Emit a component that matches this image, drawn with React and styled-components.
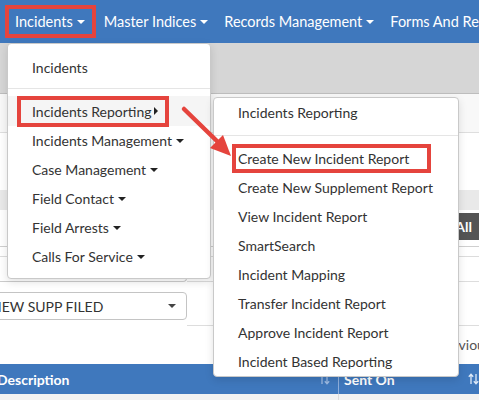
import styled, { createGlobalStyle } from "styled-components";

const GlobalStyle = createGlobalStyle`
  * { box-sizing: border-box; }
  body {
    margin: 0;
    background: #fff;
    font-family: Lato, "Open Sans", sans-serif;
    overflow: hidden;
  }
`;

const RED = "#e5443d";
const BLUE = "#3f78bd";

/* page + navbar */
const Page = styled.div`
  position: relative;
  width: 479px;
  height: 400px;
  overflow: hidden;
`;

const Navbar = styled.nav`
  display: flex;
  align-items: center;
  height: 43px;
  padding-left: 5px;
  background: ${BLUE};
  white-space: nowrap;
`;

const NavItem = styled.div`
  display: flex;
  align-items: center;
  flex-shrink: 0;
  height: 33px;
  padding: ${(p) => (p.$marked ? "0 7px 0 6px" : "0 8px")};
  border: ${(p) => (p.$marked ? `4px solid ${RED}` : "none")};
  color: #fff;
  font-size: 14.5px;
`;

const Caret = styled.span`
  display: inline-block;
  width: 0;
  height: 0;
  margin-left: 4px;
  border-left: 4px solid transparent;
  border-right: 4px solid transparent;
  border-top: 4px solid ${(p) => p.$color || "#222"};
`;

const CaretRight = styled.span`
  display: inline-block;
  width: 0;
  height: 0;
  margin-left: 2px;
  border-top: 4px solid transparent;
  border-bottom: 4px solid transparent;
  border-left: 4px solid #222;
`;

/* background page */
const Content = styled.div`
  margin-left: -20px;
  width: calc(100% + 20px);
`;

const GreyBand = styled.div`
  height: 51px;
  background: #d6d6d6;
  border-bottom: 1px solid #bdbdbd;
`;

const ToolRow = styled.div`
  height: 39px;
  background: #f8f8f8;
  border-bottom: 1px solid #dedede;
`;

const Gap = styled.div`
  height: ${(p) => p.$h}px;
`;

const PanelHeading = styled.div`
  height: 20px;
  background: #e9e9e9;
`;

const FilterRow = styled.div`
  display: flex;
  justify-content: flex-end;
  align-items: flex-start;
  height: 37px;
  padding-top: 3px;
  border-bottom: 1px solid #cfcfcf;
`;

const DarkButton = styled.div`
  display: flex;
  align-items: center;
  height: 27px;
  padding: 0 7px 0 12px;
  border-radius: 3px 0 0 3px;
  background: #545454;
  color: #fff;
  font-size: 14px;
  font-weight: 700;
`;

const ThinRow = styled.div`
  height: 10px;
  border-bottom: 1px solid #dcdcdc;
`;

const FormArea = styled.div`
  display: grid;
  grid-template-columns: 207px 1fr;
  height: 107px;
`;

const Column = styled.div`
  display: flex;
  flex-direction: column;
`;

const Input = styled.div`
  height: 25px;
  border: 1px solid #cccccc;
  border-top: none;
  border-radius: 0 0 4px 4px;
`;

const Select = styled.div`
  display: flex;
  align-items: center;
  justify-content: space-between;
  height: 28px;
  margin-top: 10px;
  padding: 0 10px;
  border: 1px solid #c4c4c4;
  border-radius: 4px;
  color: #333;
  font-size: 14px;
`;

const RightLine = styled.div`
  height: ${(p) => p.$h}px;
  border-bottom: 1px solid #dddddd;
`;

const Pager = styled.div`
  display: flex;
  align-items: center;
  height: 37px;
  white-space: nowrap;
`;

const PagerText = styled.span`
  margin-left: auto;
  margin-right: -12px;
  color: #555;
  font-size: 14px;
`;

const TableHead = styled.div`
  display: grid;
  grid-template-columns: 359px 1fr;
  height: 30px;
  background: ${BLUE};
`;

const HeadCell = styled.div`
  display: flex;
  align-items: center;
  justify-content: space-between;
  padding: 0 ${(p) => p.$right}px 0 ${(p) => p.$left}px;
  border-right: ${(p) => (p.$divider ? "1px solid #8eaedb" : "none")};
  color: #fff;
  font-size: 14px;
  font-weight: 700;
  white-space: nowrap;
`;

const BodyRow = styled.div`
  display: grid;
  grid-template-columns: 359px 1fr;
  height: 10px;
  background: #f2f2f2;
`;

const BodyCell = styled.div`
  border-right: ${(p) => (p.$divider ? "1px solid #dcdcdc" : "none")};
`;

/* dropdown menus */
const Menu = styled.div`
  position: absolute;
  left: ${(p) => p.$left}px;
  top: ${(p) => p.$top}px;
  width: ${(p) => p.$width}px;
  padding: ${(p) => p.$pad};
  background: #fff;
  border: 1px solid #c9c9c9;
  border-radius: 4px;
  box-shadow: 0 3px 8px rgba(0, 0, 0, 0.12);
`;

const MenuItem = styled.div`
  display: flex;
  align-items: center;
  height: ${(p) => p.$h || 29}px;
  padding-left: ${(p) => p.$indent}px;
  background: ${(p) => (p.$active ? "#f5f5f5" : "transparent")};
  color: #333;
  font-size: 14px;
  white-space: nowrap;
`;

const Marked = styled.span`
  display: inline-flex;
  align-items: center;
  height: ${(p) => p.$h}px;
  padding: 0 ${(p) => p.$right}px 0 ${(p) => p.$left}px;
  border: 4px solid ${RED};
`;

const Divider = styled.div`
  height: 1px;
  margin: ${(p) => p.$m};
  background: #e5e5e5;
`;

const Overlay = styled.svg`
  position: absolute;
  left: 0;
  top: 0;
  pointer-events: none;
`;

function SortIcon({ color }) {
  return (
    <svg width="11" height="12" viewBox="0 0 11 12">
      <g fill="none" stroke={color} strokeWidth="1.3">
        <path d="M3 11V1.5M0.8 3.8L3 1.3L5.2 3.8" />
        <path d="M8 1v9.5M5.8 8.2L8 10.7L10.2 8.2" />
      </g>
    </svg>
  );
}

const menuOne = ["Incidents Management", "Case Management", "Field Contact", "Field Arrests", "Calls For Service"];
const menuTwo = [
  "Create New Supplement Report",
  "View Incident Report",
  "SmartSearch",
  "Incident Mapping",
  "Transfer Incident Report",
  "Approve Incident Report",
  "Incident Based Reporting",
];

export default function App() {
  return (
    <Page>
      <GlobalStyle />
      <Navbar>
        <NavItem $marked>
          Incidents <Caret $color="#fff" />
        </NavItem>
        <NavItem>
          Master Indices <Caret $color="#fff" />
        </NavItem>
        <NavItem>
          Records Management <Caret $color="#fff" />
        </NavItem>
        <NavItem>Forms And Reports</NavItem>
      </Navbar>

      <Content>
        <GreyBand />
        <ToolRow />
        <Gap $h={57} />
        <PanelHeading />
        <FilterRow>
          <DarkButton>Select All</DarkButton>
        </FilterRow>
        <ThinRow />
        <FormArea>
          <Column>
            <Input />
            <Select>
              NEW SUPP FILED
              <Caret $color="#444" />
            </Select>
          </Column>
          <Column>
            <RightLine $h={25} />
            <RightLine $h={44} />
            <Pager>
              <PagerText>Previous</PagerText>
            </Pager>
          </Column>
        </FormArea>
        <TableHead>
          <HeadCell $left={17} $right={8} $divider>
            Description
            <SortIcon color="#9dbbe3" />
          </HeadCell>
          <HeadCell $left={5} $right={0}>
            Sent On
            <SortIcon color="#dce8f7" />
          </HeadCell>
        </TableHead>
        <BodyRow>
          <BodyCell $divider />
          <BodyCell />
        </BodyRow>
      </Content>

      <Menu $left={7} $top={43} $width={204} $pad="9px 0 7px">
        <MenuItem $indent={24}>Incidents</MenuItem>
        <Divider $m="6px 0 7px" />
        <MenuItem $indent={9} $h={30} $active>
          <Marked $h={31} $left={11} $right={7}>
            Incidents Reporting
            <CaretRight />
          </Marked>
        </MenuItem>
        {menuOne.map((label) => (
          <MenuItem key={label} $indent={24}>
            {label}
            <Caret />
          </MenuItem>
        ))}
      </Menu>

      <Menu $left={213} $top={97} $width={246} $pad="0">
        <MenuItem $indent={24}>Incidents Reporting</MenuItem>
        <Divider $m="8px 0" />
        <MenuItem $indent={18}>
          <Marked $h={29} $left={2} $right={18}>
            Create New Incident Report
          </Marked>
        </MenuItem>
        {menuTwo.map((label) => (
          <MenuItem key={label} $indent={24}>
            {label}
          </MenuItem>
        ))}
      </Menu>

      <Overlay width="479" height="400">
        <line x1="184" y1="109" x2="220" y2="144" stroke={RED} strokeWidth="4.5" strokeLinecap="round" />
        <polygon points="231,156 210,148 223,135" fill={RED} />
      </Overlay>
    </Page>
  );
}
